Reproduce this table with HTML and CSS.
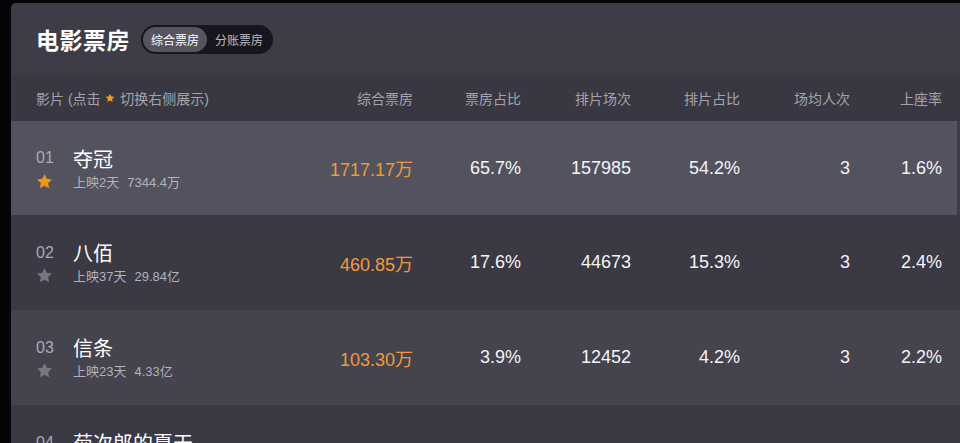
FILE: index.html
```html
<!DOCTYPE html>
<html lang="zh-CN">
<head>
<meta charset="utf-8">
<title>电影票房</title>
<link rel="stylesheet" href="styles.css">
</head>
<body>
<div class="panel">
  <div class="title-bar">
    <h1 class="title">电影票房</h1>
    <div class="toggle">
      <span class="opt active">综合票房</span>
      <span class="opt">分账票房</span>
    </div>
  </div>

  <div class="row head">
    <div class="film-h">影片 (点击 <svg class="mini-star" viewBox="0 0 24 24"><polygon points="12,1.5 15.2,8.2 22.5,9.1 17.1,14.2 18.5,21.5 12,17.9 5.5,21.5 6.9,14.2 1.5,9.1 8.8,8.2"/></svg> 切换右侧展示)</div>
    <div class="num">综合票房</div>
    <div class="num">票房占比</div>
    <div class="num">排片场次</div>
    <div class="num">排片占比</div>
    <div class="num">场均人次</div>
    <div class="num">上座率</div>
  </div>

  <div class="row item selected">
    <div class="film">
      <span class="rank">01</span>
      <span class="name">夺冠</span>
      <svg class="star on" viewBox="0 0 24 24"><polygon points="12,1.5 15.2,8.2 22.5,9.1 17.1,14.2 18.5,21.5 12,17.9 5.5,21.5 6.9,14.2 1.5,9.1 8.8,8.2"/></svg>
      <span class="sub"><span>上映2天</span><span>7344.4万</span></span>
    </div>
    <div class="num box">1717.17万</div>
    <div class="num">65.7%</div>
    <div class="num">157985</div>
    <div class="num">54.2%</div>
    <div class="num">3</div>
    <div class="num">1.6%</div>
  </div>

  <div class="row item even">
    <div class="film">
      <span class="rank">02</span>
      <span class="name">八佰</span>
      <svg class="star" viewBox="0 0 24 24"><polygon points="12,1.5 15.2,8.2 22.5,9.1 17.1,14.2 18.5,21.5 12,17.9 5.5,21.5 6.9,14.2 1.5,9.1 8.8,8.2"/></svg>
      <span class="sub"><span>上映37天</span><span>29.84亿</span></span>
    </div>
    <div class="num box">460.85万</div>
    <div class="num">17.6%</div>
    <div class="num">44673</div>
    <div class="num">15.3%</div>
    <div class="num">3</div>
    <div class="num">2.4%</div>
  </div>

  <div class="row item odd">
    <div class="film">
      <span class="rank">03</span>
      <span class="name">信条</span>
      <svg class="star" viewBox="0 0 24 24"><polygon points="12,1.5 15.2,8.2 22.5,9.1 17.1,14.2 18.5,21.5 12,17.9 5.5,21.5 6.9,14.2 1.5,9.1 8.8,8.2"/></svg>
      <span class="sub"><span>上映23天</span><span>4.33亿</span></span>
    </div>
    <div class="num box">103.30万</div>
    <div class="num">3.9%</div>
    <div class="num">12452</div>
    <div class="num">4.2%</div>
    <div class="num">3</div>
    <div class="num">2.2%</div>
  </div>

  <div class="row item even">
    <div class="film">
      <span class="rank">04</span>
      <span class="name">菊次郎的夏天</span>
      <svg class="star" viewBox="0 0 24 24"><polygon points="12,1.5 15.2,8.2 22.5,9.1 17.1,14.2 18.5,21.5 12,17.9 5.5,21.5 6.9,14.2 1.5,9.1 8.8,8.2"/></svg>
      <span class="sub"><span>上映3天</span><span>1524.1万</span></span>
    </div>
    <div class="num box">72.58万</div>
    <div class="num">2.8%</div>
    <div class="num">17840</div>
    <div class="num">6.1%</div>
    <div class="num">2</div>
    <div class="num">1.1%</div>
  </div>
</div>
</body>
</html>
```

FILE: styles.css
```css
html, body {
  margin: 0;
  padding: 0;
  background: #050507;
  height: 443px;
  overflow: hidden;
}

body {
  font-family: "Liberation Sans", "Noto Sans CJK SC", sans-serif;
  color: #ffffff;
}

.panel {
  margin: 3px 0 0 11px;
  background: #3e3d47;
  border-top-left-radius: 5px;
  overflow: hidden;
}

.title-bar {
  height: 72px;
  display: flex;
  align-items: center;
  padding-left: 25px;
  gap: 11px;
}

.title {
  margin: 0;
  font-size: 23px;
  font-weight: bold;
  color: #ffffff;
  font-family: "Noto Sans CJK SC", sans-serif;
  letter-spacing: 0.5px;
}

.toggle {
  display: flex;
  align-items: center;
  height: 29px;
  padding: 0 2px;
  box-sizing: border-box;
  background: #17161c;
  border-radius: 15px;
  font-family: "Noto Sans CJK SC", sans-serif;
  font-size: 12px;
}

.opt {
  height: 25px;
  line-height: 25px;
  padding: 0 8px;
  border-radius: 13px;
  color: #bdbcc4;
}

.opt.active {
  background: #56555f;
  color: #ffffff;
}

.row {
  display: grid;
  grid-template-columns: 1fr 108px 108px 110px 109px 110px 92px;
  align-items: center;
  padding: 0 18px 0 25px;
}

.num {
  text-align: right;
}

.head {
  height: 46px;
  background: #393842;
  font-size: 14px;
  color: #a4a3ac;
}

.film-h {
  display: flex;
  align-items: center;
  white-space: pre;
}

.mini-star {
  width: 10px;
  height: 10px;
  fill: #f39a1a;
  margin: 0 1px;
}

.item {
  height: 95px;
  font-size: 18px;
  color: #f4f4f6;
}

.selected {
  height: 94px;
  background: #53525f;
  margin-right: 3px;
  padding-right: 15px;
}

.even {
  background: #3a3944;
}

.odd {
  background: #44434e;
}

.film {
  display: grid;
  grid-template-columns: 37px auto;
  grid-template-rows: 24px 18px;
  row-gap: 2px;
  align-items: center;
}

.rank {
  font-size: 16px;
  color: #aaa9b2;
}

.name {
  font-size: 20px;
  color: #ffffff;
  font-family: "Noto Sans CJK SC", sans-serif;
}

.star {
  width: 17px;
  height: 17px;
  fill: #777682;
}

.star.on {
  fill: #f3951b;
}

.sub {
  font-size: 13px;
  color: #b3b2bb;
  display: flex;
  gap: 8px;
}

.box {
  color: #f09a3a;
}
```
